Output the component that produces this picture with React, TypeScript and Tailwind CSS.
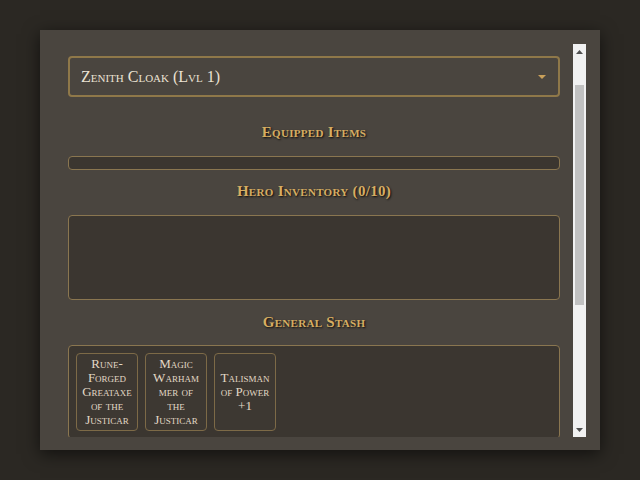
import React from "react";

const serif = "font-['Liberation_Serif','DejaVu_Serif',serif] [font-variant:small-caps]";

function Heading({ children }: { children: React.ReactNode }) {
  return (
    <h2
      className={`${serif} text-center text-[15px] font-bold leading-[20px] tracking-[0.3px] text-[#d6ad62] [text-shadow:1px_1px_2px_rgba(0,0,0,0.85)]`}
    >
      {children}
    </h2>
  );
}

function Card({ name }: { name: string }) {
  return (
    <div
      className={`${serif} flex h-[78px] w-[62px] shrink-0 items-center justify-center rounded-[4px] border border-[#7d6a47] bg-[#3d3832] px-[5px] text-center text-[13px] leading-[14px] text-[#e2d8c6] [overflow-wrap:anywhere]`}
    >
      {name}
    </div>
  );
}

function Scrollbar() {
  return (
    <div className="flex w-[13px] shrink-0 flex-col bg-[#f1f1f1]">
      <div className="flex h-[15px] items-center justify-center">
        <svg width="7" height="4" viewBox="0 0 7 4">
          <path d="M0 4 L7 4 L3.5 0 Z" fill="#505050" />
        </svg>
      </div>
      <div className="flex flex-1 flex-col">
        <div className="h-[26px]" />
        <div className="mx-[2px] h-[220px] bg-[#c1c1c1]" />
      </div>
      <div className="flex h-[15px] items-center justify-center">
        <svg width="7" height="4" viewBox="0 0 7 4">
          <path d="M0 0 L7 0 L3.5 4 Z" fill="#505050" />
        </svg>
      </div>
    </div>
  );
}

export default function App() {
  return (
    <div className="flex h-[480px] w-[640px] items-center justify-center bg-[#2b2823]">
      <div className="h-[420px] w-[560px] bg-[#4a453f] p-[14px] shadow-[0_4px_16px_rgba(0,0,0,0.6)]">
        <div className="flex h-[393px]">
          <div className="flex-1 overflow-hidden">
            <div className="flex flex-col pl-[14px] pr-[13px] pt-[12px]">
              <button
                className={`${serif} flex h-[41px] items-center justify-between rounded-[4px] border-2 border-[#8f7849] bg-[#4a453f] pl-[11px] pr-[12px] text-left text-[16px] text-[#ebe2d3]`}
              >
                <span>Zenith Cloak (Lvl 1)</span>
                <svg width="8" height="4" viewBox="0 0 8 4">
                  <path d="M0 0 L8 0 L4 4 Z" fill="#c9a05a" />
                </svg>
              </button>
              <div className="mt-[25px]">
                <Heading>Equipped Items</Heading>
              </div>
              <div className="mt-[14px] h-[14px] rounded-[4px] border border-[#8a7650] bg-[#3b3630]" />
              <div className="mt-[11px]">
                <Heading>Hero Inventory (0/10)</Heading>
              </div>
              <div className="mt-[14px] h-[85px] rounded-[4px] border border-[#8a7650] bg-[#3b3630]" />
              <div className="mt-[12px]">
                <Heading>General Stash</Heading>
              </div>
              <div className="mt-[13px] flex gap-[7px] rounded-[4px] border border-[#8a7650] bg-[#3b3630] p-[7px]">
                <Card name="Rune-Forged Greataxe of the Justicar" />
                <Card name="Magic Warhammer of the Justicar" />
                <Card name="Talisman of Power +1" />
              </div>
            </div>
          </div>
          <Scrollbar />
        </div>
      </div>
    </div>
  );
}
